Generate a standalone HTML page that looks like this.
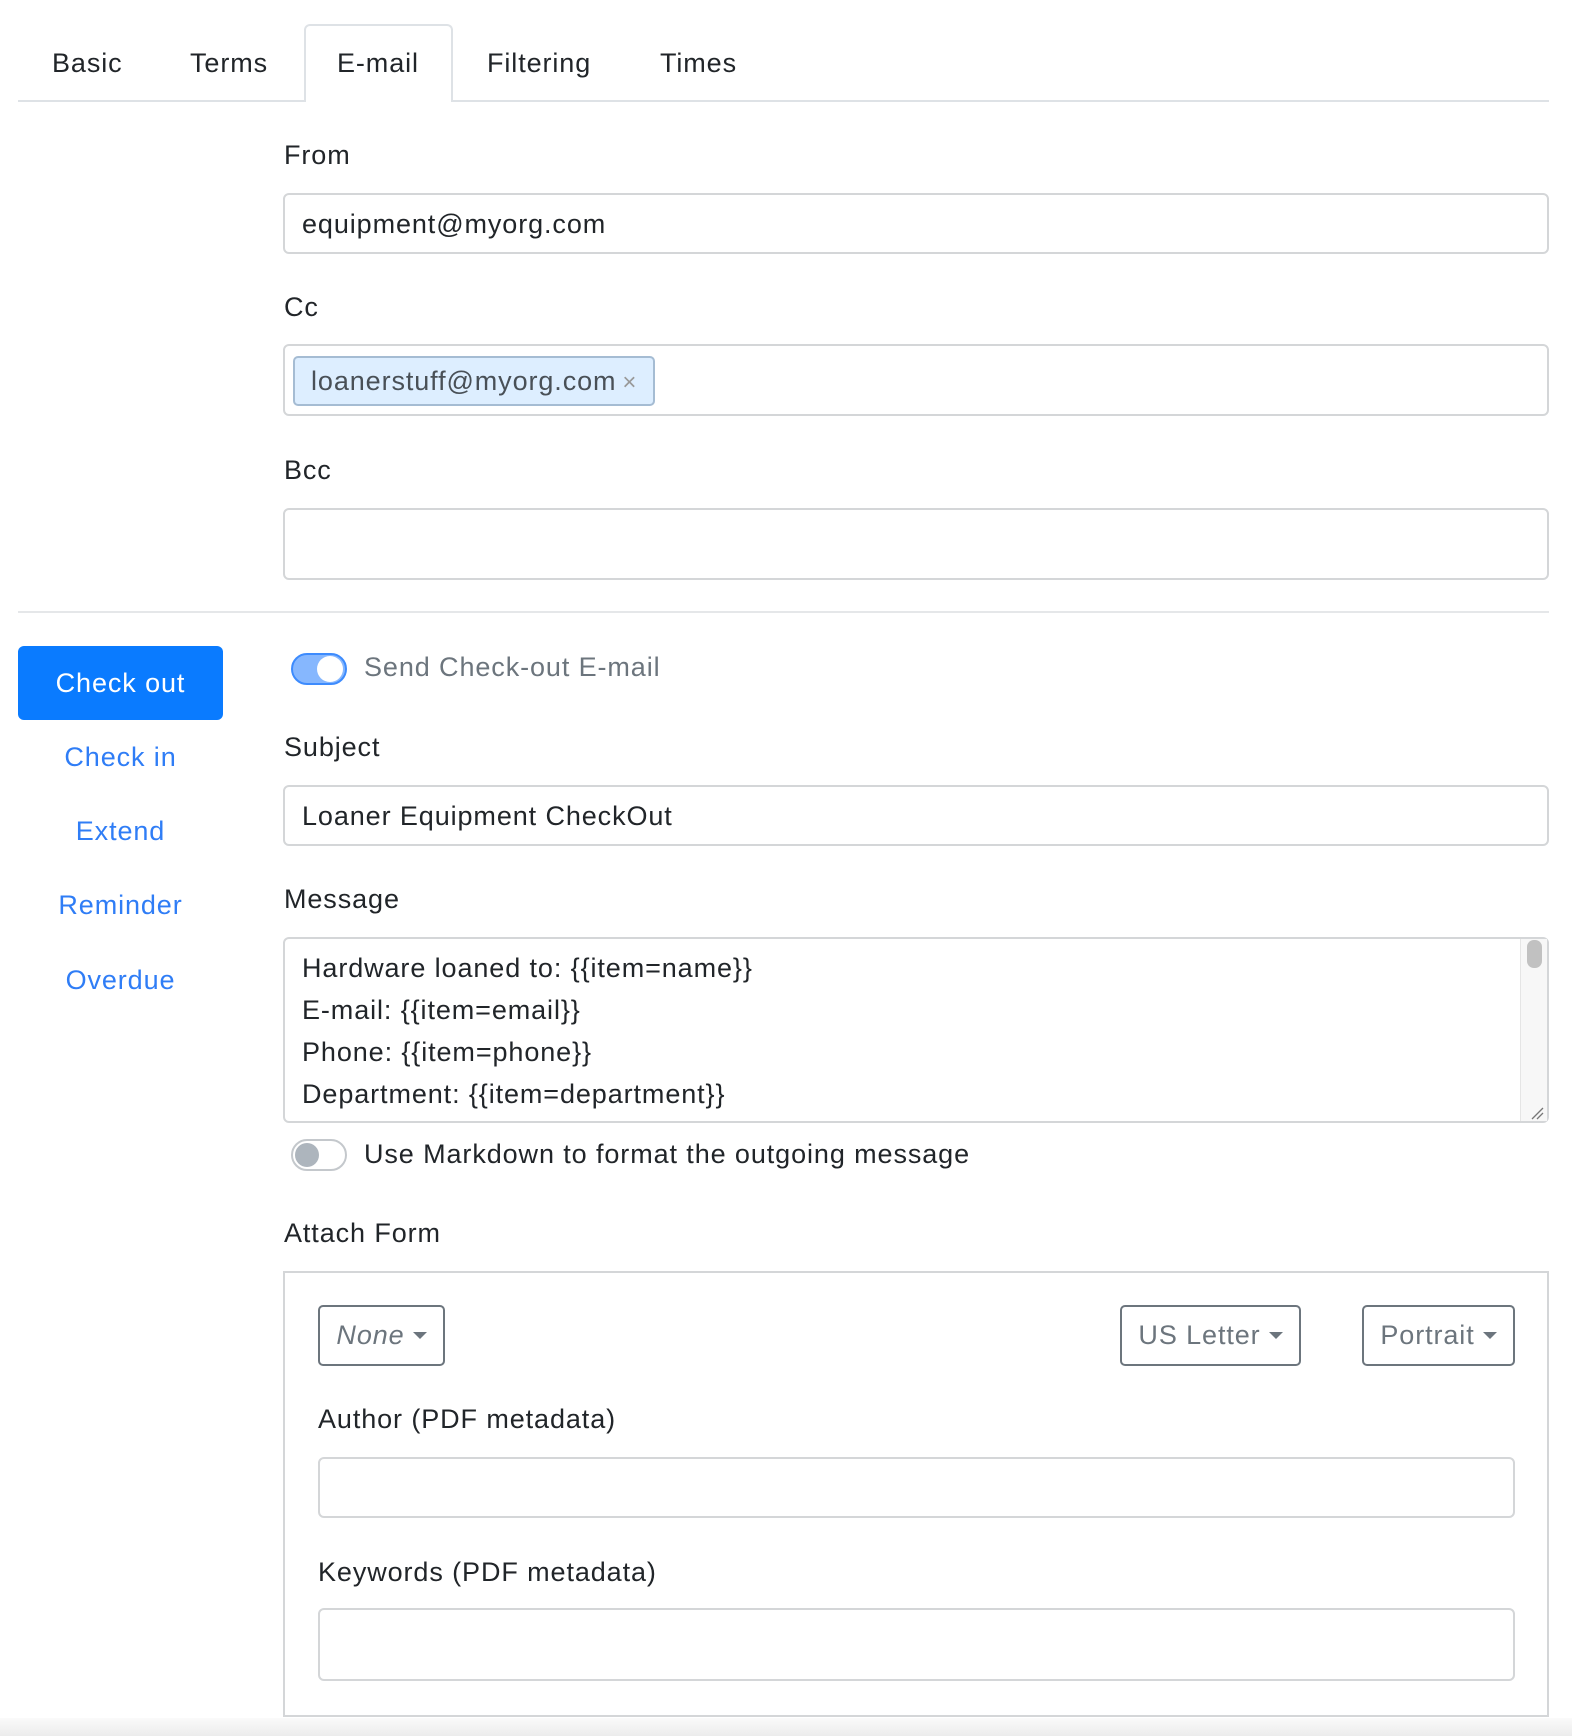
<!DOCTYPE html>
<html><head><meta charset="utf-8"><style>
*{box-sizing:border-box;margin:0;padding:0}
body{width:1572px;height:1736px;background:#fff;font-family:"Liberation Sans",Arial,sans-serif;color:#212529;position:relative;overflow:hidden;letter-spacing:0.9px}
.a{position:absolute}
.t{font-size:27px;line-height:1;white-space:nowrap}
.inp{position:absolute;left:283px;width:1266px;border:2px solid #d4d6d8;border-radius:6px;background:#fff}
.lbl{position:absolute;left:284px;font-size:27px;line-height:1}
.nav{position:absolute;left:18px;width:205px;text-align:center;color:#2f7df6;font-size:27px;line-height:1}
.dd{position:absolute;border:2px solid #6c757d;border-radius:5px;color:#6c757d;font-size:27px;display:flex;align-items:center;justify-content:center;gap:8px}
.car{width:0;height:0;border-left:7px solid transparent;border-right:7px solid transparent;border-top:7px solid #6c757d}
</style></head><body>
<div class="a" style="left:18px;top:100px;width:1531px;height:2px;background:#dee2e6"></div>
<div class="a" style="left:304px;top:24px;width:149px;height:78px;border:2px solid #dee2e6;border-bottom:none;border-radius:6px 6px 0 0;background:#fff"></div>
<div class="a t" style="left:52px;top:50px">Basic</div>
<div class="a t" style="left:190px;top:50px">Terms</div>
<div class="a t" style="left:337px;top:50px">E-mail</div>
<div class="a t" style="left:487px;top:50px">Filtering</div>
<div class="a t" style="left:660px;top:50px">Times</div>

<div class="lbl" style="top:142px">From</div>
<div class="inp" style="top:193px;height:61px"></div>
<div class="a t" style="left:302px;top:211px">equipment@myorg.com</div>

<div class="lbl" style="top:294px">Cc</div>
<div class="inp" style="top:344px;height:72px"></div>
<div class="a" style="left:293px;top:356px;width:362px;height:50px;background:#ddeeff;border:2px solid #a5bcd3;border-radius:5px"></div>
<div class="a t" style="left:311px;top:368px;color:#495057">loanerstuff@myorg.com<span style="color:#999;font-size:24px;margin-left:6px">×</span></div>

<div class="lbl" style="top:457px">Bcc</div>
<div class="inp" style="top:508px;height:72px"></div>

<div class="a" style="left:18px;top:611px;width:1531px;height:2px;background:#e5e7e9"></div>

<div class="a" style="left:18px;top:646px;width:205px;height:74px;background:#0a7bff;border-radius:6px;color:#fff;font-size:27px;line-height:74px;text-align:center">Check out</div>
<div class="nav" style="top:744px">Check in</div>
<div class="nav" style="top:818px">Extend</div>
<div class="nav" style="top:892px">Reminder</div>
<div class="nav" style="top:967px">Overdue</div>

<div class="a" style="left:291px;top:653px;width:56px;height:32px;border-radius:16px;background:#86b7fe;border:2px solid #3d8bfd"></div>
<div class="a" style="left:317px;top:656px;width:26px;height:26px;border-radius:50%;background:#fff"></div>
<div class="a t" style="left:364px;top:654px;color:#6c757d">Send Check-out E-mail</div>

<div class="lbl" style="top:734px">Subject</div>
<div class="inp" style="top:785px;height:61px"></div>
<div class="a t" style="left:302px;top:803px">Loaner Equipment CheckOut</div>

<div class="lbl" style="top:886px">Message</div>
<div class="inp" style="top:937px;height:186px"></div>
<div class="a" style="left:1520px;top:939px;width:27px;height:182px;background:#f7f7f7;border-left:1px solid #e5e5e5"></div>
<div class="a" style="left:1527px;top:940px;width:15px;height:28px;border-radius:7px;background:#c1c1c1"></div>
<svg class="a" style="left:1530px;top:1106px" width="14" height="14"><path d="M2 13L13 2M7 13L13 7" stroke="#777" stroke-width="1.3"/></svg>
<div class="a t" style="left:302px;top:947px;line-height:42px">Hardware loaned to: {{item=name}}<br>E-mail: {{item=email}}<br>Phone: {{item=phone}}<br>Department: {{item=department}}</div>

<div class="a" style="left:291px;top:1139px;width:56px;height:32px;border-radius:16px;background:#fff;border:2px solid #c4c8cc"></div>
<div class="a" style="left:295px;top:1143px;width:24px;height:24px;border-radius:50%;background:#adb5bd"></div>
<div class="a t" style="left:364px;top:1141px">Use Markdown to format the outgoing message</div>

<div class="lbl" style="top:1220px">Attach Form</div>
<div class="a" style="left:283px;top:1271px;width:1266px;height:446px;border:2px solid #d4d6d8"></div>
<div class="dd" style="left:318px;top:1305px;width:127px;height:61px;font-style:italic">None<span class="car"></span></div>
<div class="dd" style="left:1120px;top:1305px;width:181px;height:61px">US Letter<span class="car"></span></div>
<div class="dd" style="left:1362px;top:1305px;width:153px;height:61px">Portrait<span class="car"></span></div>

<div class="a t" style="left:318px;top:1406px">Author (PDF metadata)</div>
<div class="a" style="left:318px;top:1457px;width:1197px;height:61px;border:2px solid #d4d6d8;border-radius:6px"></div>
<div class="a t" style="left:318px;top:1559px">Keywords (PDF metadata)</div>
<div class="a" style="left:318px;top:1608px;width:1197px;height:73px;border:2px solid #d4d6d8;border-radius:6px"></div>
<div class="a" style="left:0;top:1718px;width:1572px;height:18px;background:linear-gradient(#fafafa,#ececec)"></div>
</body></html>
